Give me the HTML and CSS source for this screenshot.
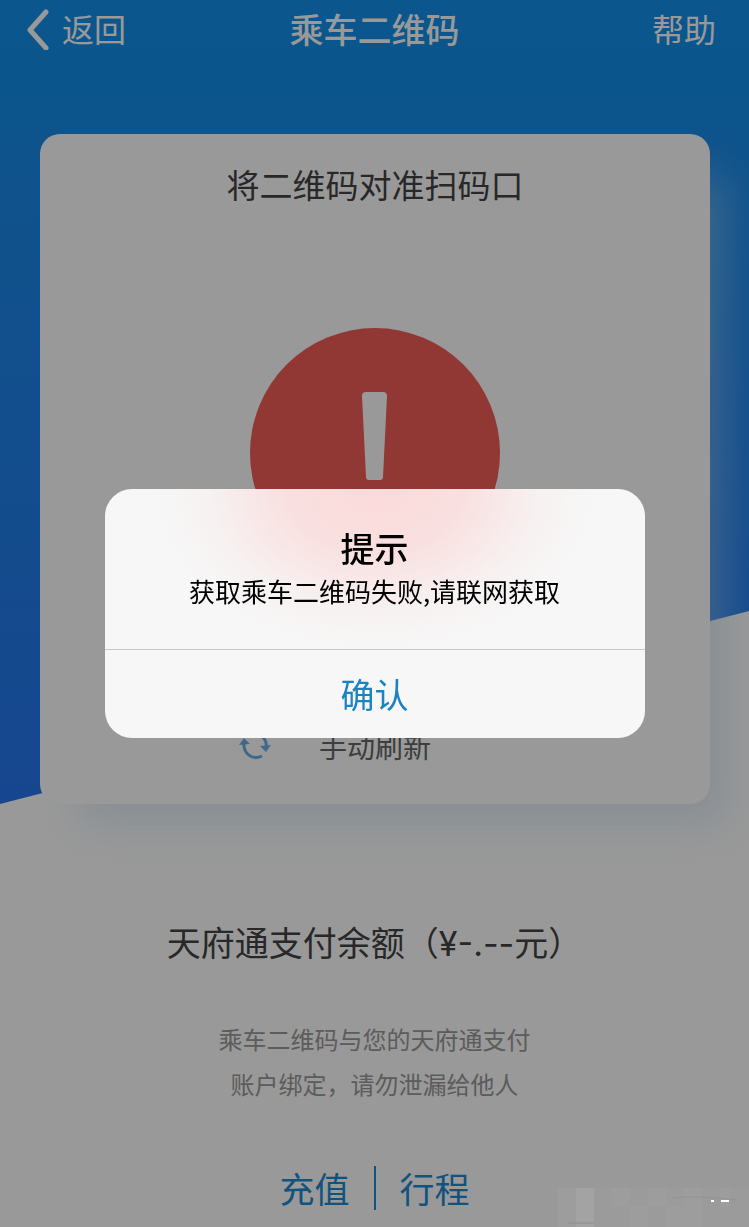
FILE: index.html
```html
<!DOCTYPE html>
<html lang="zh-CN">
<head>
    <meta charset="UTF-8">
    <meta name="viewport" content="width=device-width, initial-scale=1.0">
    <title>乘车二维码</title>
    <link rel="stylesheet" href="styles.css">
</head>
<body>
    <div class="hero">
        <header class="navbar">
            <a href="#" class="nav-back">
                <svg width="24" height="44" viewBox="0 0 24 44" fill="none" stroke="currentColor" stroke-width="5" stroke-linecap="round" stroke-linejoin="round">
                    <path d="M20 6 L4 24 L20 42"/>
                </svg>
                返回
            </a>
            <h1>乘车二维码</h1>
            <a href="#" class="nav-help">帮助</a>
        </header>

        <main class="card">
            <h2>将二维码对准扫码口</h2>
            <svg class="warning" viewBox="0 0 250 250">
                <circle cx="125" cy="125" r="125" fill="#f25c58"/>
                <path d="M116 64 H133 Q137 64 137 68 L133 149 Q133 152 130 152 H119 Q116 152 116 149 L112 68 Q112 64 116 64 Z" fill="#fff"/>
                <circle cx="125" cy="177" r="12" fill="#fff"/>
            </svg>
            <button type="button" class="refresh">
                <svg width="32" height="32" viewBox="0 0 32 32" fill="none">
                    <path d="M5 13 C4 23 13 31 23 26" stroke="currentColor" stroke-width="3"/>
                    <path d="M27 18 C29 8 19 1 10 5" stroke="currentColor" stroke-width="3"/>
                    <path d="M0 15 L5 8 L11 14 Z M21 16 L32 15 L27 22 Z" fill="currentColor"/>
                </svg>
                <span>手动刷新</span>
            </button>
        </main>
    </div>

    <footer class="account">
        <p class="balance">天府通支付余额（¥-.--元）</p>
        <p class="tips">乘车二维码与您的天府通支付<br>账户绑定，请勿泄漏给他人</p>
        <nav class="links">
            <a href="#">充值</a>
            <a href="#">行程</a>
        </nav>
    </footer>

    <div class="overlay">
        <div class="dialog" role="alertdialog" aria-labelledby="dialogTitle" aria-describedby="dialogText">
            <div class="dialog-body">
                <h3 id="dialogTitle">提示</h3>
                <p id="dialogText">获取乘车二维码失败,请联网获取</p>
            </div>
            <button type="button" class="dialog-ok">确认</button>
        </div>

        <!-- mosaic in the corner -->
        <svg class="mosaic" width="191" height="39" viewBox="0 0 191 39" aria-hidden="true">
            <rect width="191" height="39" fill="#9b9b9b"/>
            <path d="M0 0H18V39H0Z M54 0H72V18H54Z M72 18H90V39H72Z M90 0H108V18H90Z M126 0H144V18H126Z M108 18H144V39H108Z M162 0H172V18H162Z" fill="#9d9d9d"/>
            <path d="M18 0H36V39H18Z" fill="#a3a3a3"/>
            <path d="M114 10 Q140 7 180 12" stroke="#929292" stroke-width="1" fill="none"/>
            <path d="M10 35H36" stroke="#8e8e8e" stroke-width="1"/>
            <path d="M153 13H156 M163 13H171" stroke="#fff" stroke-width="2"/>
        </svg>
    </div>
</body>
</html>
```
FILE: styles.css
```css
* {
    box-sizing: border-box;
}

body {
    margin: 0;
    min-height: 100vh;
    background-color: #ffffff;
    color: #444444;
    font-family: "Noto Sans CJK SC", "Noto Sans", sans-serif;
}

h1, h2, h3, p {
    margin: 0;
}

a {
    color: inherit;
    text-decoration: none;
}

button {
    border: none;
    padding: 0;
    background: none;
    font-family: inherit;
}

.hero {
    position: relative;
    z-index: 0;
}

/* slanted blue background */
.hero::before {
    content: "";
    position: absolute;
    inset: 0;
    z-index: -1;
    background: linear-gradient(#1190ec, #128ee9 12%, #1a8be9 18%, #2676ee 100%);
    clip-path: polygon(0 0, 100% 0, 100% 76%, 0 100%);
}

.navbar {
    display: grid;
    grid-template-columns: 1fr auto 1fr;
    align-items: center;
    height: 56px;
    padding: 0 26px;
    color: #ffffff;
    font-size: 32px;
}

.navbar h1 {
    font-size: 34px;
    font-weight: 500;
}

.nav-back {
    display: flex;
    align-items: center;
    gap: 12px;
}

.nav-help {
    justify-self: end;
    padding-right: 7px;
}

.card {
    display: flex;
    flex-direction: column;
    align-items: center;
    height: 670px;
    margin: 78px 39px 0 40px;
    padding-top: 26px;
    border-radius: 20px;
    background-color: #ffffff;
    box-shadow: 28px 30px 40px -12px rgba(185, 215, 237, 0.45);
}

.card h2 {
    font-size: 33px;
    font-weight: 400;
    line-height: 48px;
}

.warning {
    width: 250px;
    height: 250px;
    margin-top: 120px;
}

.refresh {
    display: flex;
    align-items: center;
    gap: 48px;
    margin: 148px 80px 0 0;
    color: #69b0e2;
    font-size: 28px;
    line-height: 40px;
}

.refresh span {
    color: #666666;
}

.account {
    padding: 116px 20px 16px;
    text-align: center;
}

.balance {
    font-family: Inter, "Noto Sans CJK SC", sans-serif;
    font-size: 34px;
    line-height: 48px;
}

.tips {
    margin-top: 48px;
    color: #999999;
    font-size: 24px;
    line-height: 45px;
}

.links {
    display: flex;
    justify-content: center;
    margin-top: 60px;
    color: #1d8ad2;
    font-size: 35px;
    line-height: 44px;
}

.links a {
    padding: 0 24px;
}

.links a + a {
    border-left: 2px solid #1d8ad2;
}

.overlay {
    position: fixed;
    inset: 0;
    display: flex;
    justify-content: center;
    align-items: center;
    background-color: rgba(0, 0, 0, 0.4);
}

.dialog {
    width: 540px;
    max-width: 90%;
    border-radius: 27px;
    overflow: hidden;
    background: radial-gradient(220px 160px at 50% 0, #fbdada, #f9e0e0 40%, #f7f1f1 75%, #f7f7f7);
    color: #000000;
    text-align: center;
}

.dialog-body {
    height: 160px;
    padding-top: 35px;
}

.dialog h3 {
    font-size: 34px;
    font-weight: 500;
    line-height: 48px;
}

.dialog p {
    font-size: 26px;
    line-height: 38px;
}

.dialog-ok {
    width: 100%;
    height: 89px;
    padding-bottom: 2px;
    border-top: 1px solid #c8c8c8;
    color: #1a83c0;
    font-size: 34px;
}

.mosaic {
    position: absolute;
    right: 0;
    bottom: 0;
}
```
